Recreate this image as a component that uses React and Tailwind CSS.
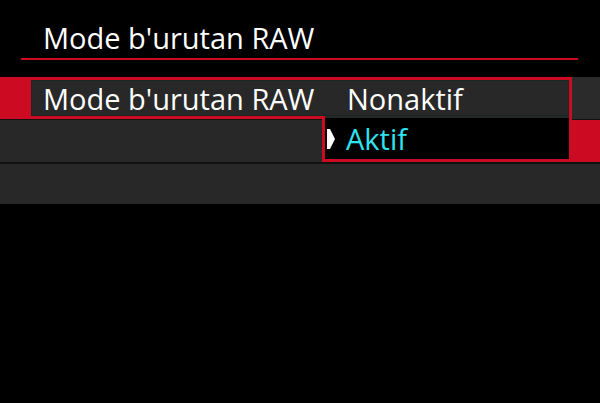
import React from 'react';

const font = { fontFamily: '"Open Sans", "Noto Sans", sans-serif' };

export default function App() {
  return (
    <div className="relative w-[600px] h-[403px] bg-black overflow-hidden text-white" style={font}>
      {/* judul menu */}
      <div className="h-[77px] pt-[23px]">
        <div className="pl-[43px] text-[29px] leading-[29px]">Mode b'urutan RAW</div>
        <div className="ml-[21px] w-[557px] h-[2px] bg-[#cc0a22] mt-[6px]" />
      </div>

      {/* baris 1 - terpilih */}
      <div className="flex h-[42px]">
        <div className="w-[572px] bg-[#cc0a22] pl-[31px] pr-[3px] pt-[3px] pb-[3px]">
          <div className="h-full bg-[#282828] border border-[#1b2622] flex items-center">
            <span className="pl-[11px] w-[315px] text-[29px] leading-[29px]">Mode b'urutan RAW</span>
            <span className="text-[29px] leading-[29px]">Nonaktif</span>
          </div>
        </div>
        <div className="flex-1 bg-[#2b2b2b]" />
      </div>
      <div className="h-[1px] bg-[#111]" />

      {/* baris 2 */}
      <div className="flex h-[42px]">
        <div className="w-[572px] bg-[#282828]" />
        <div className="flex-1 bg-[#cc0a22]" />
      </div>
      <div className="h-[2px] bg-[#111]" />

      {/* baris 3 */}
      <div className="h-[40px] bg-[#282828]" />

      {/* pilihan popup */}
      <div className="absolute left-[322px] top-[116px] w-[250px] h-[46px] border-x-[3px] border-b-[3px] border-[#cc0a22] bg-black">
        <div className="h-[2px] bg-[#282828]" />
        <div className="flex items-center h-[41px]">
          <svg width="8" height="20" viewBox="0 0 8 20" className="ml-[2px]">
            <path d="M0 0 H3 L8 10 L3 20 H0 Z" fill="#ffffff" />
          </svg>
          <span className="ml-[11px] text-[29px] leading-[29px] text-[#2fe3ef]">Aktif</span>
        </div>
      </div>
    </div>
  );
}
